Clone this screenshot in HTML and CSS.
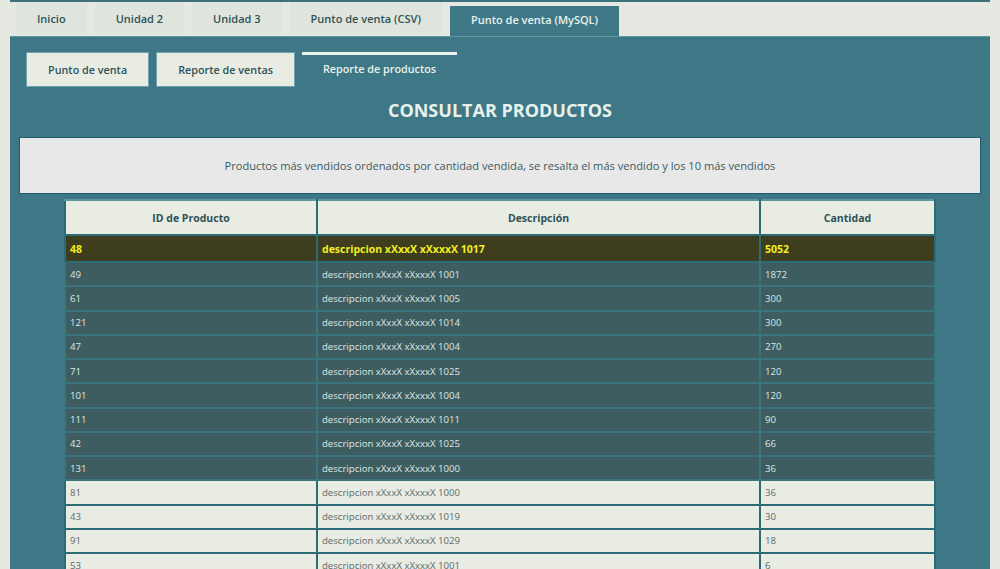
FILE: index.html
```html
<!DOCTYPE html>
<html lang="es">
<head>
<meta charset="utf-8">
<title>Reporte de productos</title>
<link rel="stylesheet" href="styles.css">
</head>
<body>
<div class="page">
  <nav class="tabs">
    <a class="tab">Inicio</a>
    <a class="tab">Unidad 2</a>
    <a class="tab">Unidad 3</a>
    <a class="tab">Punto de venta (CSV)</a>
    <a class="tab active">Punto de venta (MySQL)</a>
  </nav>
  <main class="panel">
    <nav class="subtabs">
      <a class="subtab">Punto de venta</a>
      <a class="subtab">Reporte de ventas</a>
      <a class="subtab active">Reporte de productos</a>
    </nav>
    <h1 class="title">CONSULTAR PRODUCTOS</h1>
    <div class="info">Productos más vendidos ordenados por cantidad vendida, se resalta el más vendido y los 10 más vendidos</div>
    <table class="report">
      <thead>
        <tr><th class="c1">ID de Producto</th><th class="c2">Descripción</th><th class="c3">Cantidad</th></tr>
      </thead>
      <tbody>
        <tr class="top1"><td>48</td><td>descripcion xXxxX xXxxxX 1017</td><td>5052</td></tr>
        <tr class="top10"><td>49</td><td>descripcion xXxxX xXxxxX 1001</td><td>1872</td></tr>
        <tr class="top10"><td>61</td><td>descripcion xXxxX xXxxxX 1005</td><td>300</td></tr>
        <tr class="top10"><td>121</td><td>descripcion xXxxX xXxxxX 1014</td><td>300</td></tr>
        <tr class="top10"><td>47</td><td>descripcion xXxxX xXxxxX 1004</td><td>270</td></tr>
        <tr class="top10"><td>71</td><td>descripcion xXxxX xXxxxX 1025</td><td>120</td></tr>
        <tr class="top10"><td>101</td><td>descripcion xXxxX xXxxxX 1004</td><td>120</td></tr>
        <tr class="top10"><td>111</td><td>descripcion xXxxX xXxxxX 1011</td><td>90</td></tr>
        <tr class="top10"><td>42</td><td>descripcion xXxxX xXxxxX 1025</td><td>66</td></tr>
        <tr class="top10"><td>131</td><td>descripcion xXxxX xXxxxX 1000</td><td>36</td></tr>
        <tr><td>81</td><td>descripcion xXxxX xXxxxX 1000</td><td>36</td></tr>
        <tr><td>43</td><td>descripcion xXxxX xXxxxX 1019</td><td>30</td></tr>
        <tr><td>91</td><td>descripcion xXxxX xXxxxX 1029</td><td>18</td></tr>
        <tr><td>53</td><td>descripcion xXxxX xXxxxX 1001</td><td>6</td></tr>
      </tbody>
    </table>
  </main>
</div>
</body>
</html>
```
FILE: styles.css
```css
html, body {
  margin: 0;
  padding: 0;
  background: #e6e9e1;
  font-family: "Open Sans", "Liberation Sans", sans-serif;
  height: 100%;
  overflow: hidden;
}
.page {
  margin: 0 10px;
  border-top: 2px solid #3b6f7b;
}
.tabs {
  display: flex;
  gap: 8px;
  padding: 1px 6px 0;
  height: 33px;
  align-items: flex-start;
}
.tab {
  display: block;
  height: 31px;
  line-height: 32px;
  padding: 0 21px;
  background: #dfe5dc;
  color: #2f5257;
  font-size: 11px;
  font-weight: 600;
}
.tab.active {
  margin-top: 3px;
  height: 30px;
  line-height: 28px;
  background: #3e7886;
  color: #e9f1ec;
}
.panel {
  background: #3e7886;
  border-top: 1px solid #5e96a2;
  padding: 15px 9px 0;
  height: 560px;
}
.subtabs {
  display: flex;
  gap: 7px;
  padding-left: 7px;
}
.subtab {
  display: block;
  height: 33px;
  line-height: 33px;
  padding: 0 21px;
  background: #e8ece3;
  border: 1px solid #6fa3ad;
  color: #2f5257;
  font-size: 10.8px;
  font-weight: 600;
}
.subtab.active {
  background: transparent;
  border: none;
  border-top: 3px solid #eef2ec;
  height: 32px;
  line-height: 28px;
  color: #e9f1ec;
}
.title {
  margin: 0;
  height: 50px;
  line-height: 47px;
  text-align: center;
  color: #e9f1ec;
  font-size: 18px;
  font-weight: 700;
}
.info {
  background: #e8e8e8;
  border: 1px solid #1f5f6b;
  height: 55px;
  line-height: 56px;
  text-align: center;
  color: #3c5a60;
  font-size: 11.1px;
}
.report {
  margin: 5px auto 0;
  width: 872px;
  border-collapse: collapse;
  font-size: 9.6px;
}
.report th, .report td {
  border: 2px solid #2c6c79;
  text-align: left;
  padding: 0 4px;
}
.report th {
  height: 33px;
  background: #e8ece3;
  color: #2f5257;
  font-size: 10.5px;
  font-weight: 700;
  text-align: center;
  border-top-color: #5e96a2;
}
.report .c1 { width: 242px; }
.report .c2 { width: 433px; }
.report td {
  height: 22.25px;
  background: #e8ece3;
  color: #5d6b6b;
}
.report tr.top10 td {
  background: #3e5d60;
  color: #dde8e4;
  border-color: #3b7380;
}
.report tr.top1 td {
  height: 25px;
  background: #3e3d1d;
  color: #f2f022;
  font-weight: 700;
  font-size: 10.5px;
}
```
